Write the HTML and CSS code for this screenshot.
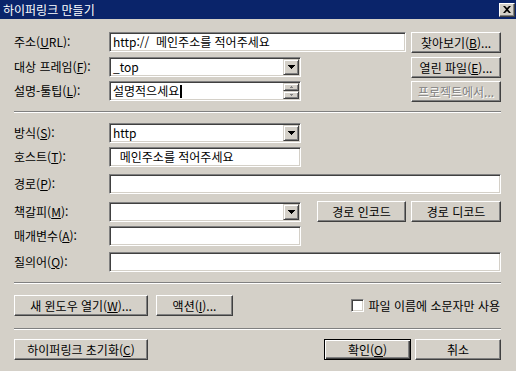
FILE: index.html
```html
<!DOCTYPE html>
<html lang="ko">
<head>
<meta charset="utf-8">
<title>하이퍼링크 만들기</title>
<link rel="stylesheet" href="styles.css">
</head>
<body>
<div class="win">
  <div class="title">
    <span class="title-text">하이퍼링크 만들기</span>
    <span class="close"><svg width="8" height="7" viewBox="0 0 8 7"><path d="M0 0h2l2 2 2-2h2L5 3.5 8 7H6L4 5 2 7H0l3-3.5z" fill="#000"/></svg></span>
  </div>
  <div class="body">
    <div class="sec-top">
      <div class="row">
        <span class="lbl">주소(<u>U</u>RL):</span>
        <div class="edit w-url">http://  메인주소를 적어주세요</div>
        <button class="btn side">찾아보기(<u>B</u>)...</button>
      </div>
      <div class="row">
        <span class="lbl">대상 프레임(<u>F</u>):</span>
        <div class="combo w-half"><span class="val">_top</span><span class="drop"><svg width="7" height="4"><rect x="0" y="0" width="7" height="1"/><rect x="1" y="1" width="5" height="1"/><rect x="2" y="2" width="3" height="1"/><rect x="3" y="3" width="1" height="1"/></svg></span></div>
        <button class="btn side">열린 파일(<u>E</u>)...</button>
      </div>
      <div class="row">
        <span class="lbl">설명-툴팁(<u>L</u>):</span>
        <div class="combo w-half"><span class="val">설명적으세요<span class="caret"></span></span>
          <span class="spin">
            <span class="spin-btn"><svg width="3" height="2"><rect x="1" y="0" width="1" height="1"/><rect x="0" y="1" width="3" height="1"/></svg></span>
            <span class="spin-btn"><svg width="3" height="2"><rect x="0" y="0" width="3" height="1"/><rect x="1" y="1" width="1" height="1"/></svg></span>
          </span>
        </div>
        <button class="btn side disabled">프로젝트에서...</button>
      </div>
    </div>

    <div class="sep sep-1"></div>

    <div class="sec-mid">
      <div class="row">
        <span class="lbl">방식(<u>S</u>):</span>
        <div class="combo w-half"><span class="val">http</span><span class="drop"><svg width="7" height="4"><rect x="0" y="0" width="7" height="1"/><rect x="1" y="1" width="5" height="1"/><rect x="2" y="2" width="3" height="1"/><rect x="3" y="3" width="1" height="1"/></svg></span></div>
      </div>
      <div class="row">
        <span class="lbl">호스트(<u>T</u>):</span>
        <div class="edit w-half">  메인주소를 적어주세요</div>
      </div>
      <div class="row">
        <span class="lbl">경로(<u>P</u>):</span>
        <div class="edit w-full"></div>
      </div>
      <div class="row">
        <span class="lbl">책갈피(<u>M</u>):</span>
        <div class="combo w-half"><span class="val"></span><span class="drop"><svg width="7" height="4"><rect x="0" y="0" width="7" height="1"/><rect x="1" y="1" width="5" height="1"/><rect x="2" y="2" width="3" height="1"/><rect x="3" y="3" width="1" height="1"/></svg></span></div>
        <div class="btn-pair">
          <button class="btn enc">경로 인코드</button>
          <button class="btn dec">경로 디코드</button>
        </div>
      </div>
      <div class="row">
        <span class="lbl">매개변수(<u>A</u>):</span>
        <div class="edit w-half"></div>
      </div>
      <div class="row">
        <span class="lbl">질의어(<u>Q</u>):</span>
        <div class="edit w-full"></div>
      </div>
    </div>

    <div class="sep sep-2"></div>

    <div class="row-actions">
      <button class="btn b-newwin">새 윈도우 열기(<u>W</u>)...</button>
      <button class="btn b-action">액션(<u>I</u>)...</button>
      <label class="check"><span class="box"></span><span>파일 이름에 소문자만 사용</span></label>
    </div>

    <div class="sep sep-3"></div>

    <div class="row-final">
      <button class="btn b-reset">하이퍼링크 초기화(<u>C</u>)</button>
      <div class="ok-cancel">
        <button class="btn default b-ok">확인(<u>O</u>)</button>
        <button class="btn b-cancel">취소</button>
      </div>
    </div>
  </div>
</div>
</body>
</html>
```

FILE: styles.css
```css
* { box-sizing: border-box; margin: 0; padding: 0; }

html, body {
  margin: 0;
  background: #d4d0c8;
}

body {
  font-family: "Noto Sans CJK KR", "Liberation Sans", sans-serif;
  font-size: 12px;
  color: #000;
}

u { text-decoration: underline; text-underline-offset: 1px; }

.win {
  width: 516px;
  height: 371px;
  background: #d4d0c8;
  display: flex;
  flex-direction: column;
}

.title {
  height: 19px;
  background: #0a246a;
  color: #fff;
  display: flex;
  align-items: center;
  justify-content: space-between;
  padding: 0 1px 0 3px;
  line-height: 19px;
}

.title-text { letter-spacing: 0; }

.close {
  width: 16px;
  height: 14px;
  background: #d4d0c8;
  border: 1px solid;
  border-color: #fff #404040 #404040 #fff;
  box-shadow: inset -1px -1px #808080;
  display: flex;
  align-items: center;
  justify-content: center;
}

.body {
  padding: 13px 15px 0 14px;
  display: flex;
  flex-direction: column;
}

.sec-top {
  display: grid;
  grid-template-rows: 25px 24px 21px;
}

.sec-mid {
  display: grid;
  grid-template-rows: 24px 27px 28px 24px 26px 20px;
}

.row {
  display: flex;
  align-items: flex-start;
}

.lbl {
  width: 95px;
  flex: none;
  line-height: 20px;
  white-space: nowrap;
}

.edit, .combo {
  height: 20px;
  background: #fff;
  border: 1px solid;
  border-color: #808080 #fff #fff #808080;
  box-shadow: inset 1px 1px #404040, inset -1px -1px #d4d0c8;
  line-height: 18px;
  white-space: pre;
  overflow: hidden;
}

.edit { padding: 0 3px; }

.w-url { width: 297px; }
.w-half { width: 192px; }
.w-full { flex: 1; }

.combo {
  display: flex;
  padding: 1px;
}

.combo .val {
  flex: 1;
  padding-left: 2px;
  line-height: 16px;
  white-space: pre;
}

.caret {
  display: inline-block;
  width: 2px;
  height: 13px;
  background: #000;
  vertical-align: -2px;
  margin-left: 1px;
}

.drop {
  width: 16px;
  height: 16px;
  background: #d4d0c8;
  border: 1px solid;
  border-color: #d4d0c8 #404040 #404040 #d4d0c8;
  box-shadow: inset 1px 1px #fff, inset -1px -1px #808080;
  display: flex;
  align-items: center;
  justify-content: center;
}

.drop svg { fill: #000; }

.spin {
  width: 16px;
  height: 16px;
  display: flex;
  flex-direction: column;
}

.spin-btn {
  flex: 1;
  background: #d4d0c8;
  border: 1px solid;
  border-color: #d4d0c8 #404040 #404040 #d4d0c8;
  box-shadow: inset 1px 1px #fff, inset -1px -1px #808080;
  display: flex;
  align-items: center;
  justify-content: center;
}

.spin-btn svg { fill: #808080; }

.btn {
  height: 21px;
  background: #d4d0c8;
  border: 1px solid;
  border-color: #fff #404040 #404040 #fff;
  box-shadow: inset -1px -1px #808080;
  font: inherit;
  color: #000;
  line-height: 18px;
  padding: 0;
  white-space: nowrap;
  text-align: center;
}

.btn.side { width: 90px; margin-left: auto; }

.btn.disabled {
  color: #808080;
  text-shadow: 1px 1px #fff;
}

.btn.default {
  border: 1px solid #000;
  box-shadow: inset 1px 1px #fff, inset -1px -1px #404040, inset -2px -2px #808080;
}

.btn-pair {
  margin-left: auto;
  display: flex;
  gap: 5px;
  margin-top: -1px;
}

.enc { width: 89px; }
.dec { width: 90px; }

.sep {
  height: 2px;
  border-top: 1px solid #808080;
  border-bottom: 1px solid #fff;
}

.sep-1 { margin: 9px 0 10px; }
.sep-2 { margin: 10px 0 11px; }
.sep-3 { margin: 12px 0 9px; }

.row-actions {
  display: flex;
  align-items: center;
  height: 21px;
}

.b-newwin { width: 134px; }
.b-action { width: 77px; margin-left: 8px; }

.check {
  margin-left: auto;
  display: flex;
  align-items: center;
  gap: 4px;
  padding-right: 1px;
}

.box {
  width: 13px;
  height: 13px;
  background: #fff;
  border: 1px solid;
  border-color: #808080 #fff #fff #808080;
  box-shadow: inset 1px 1px #404040, inset -1px -1px #d4d0c8;
}

.row-final {
  display: flex;
  align-items: center;
  height: 21px;
}

.b-reset { width: 134px; }

.ok-cancel {
  margin-left: auto;
  display: flex;
  gap: 4px;
}

.b-ok { width: 87px; }
.b-cancel { width: 86px; }
```
